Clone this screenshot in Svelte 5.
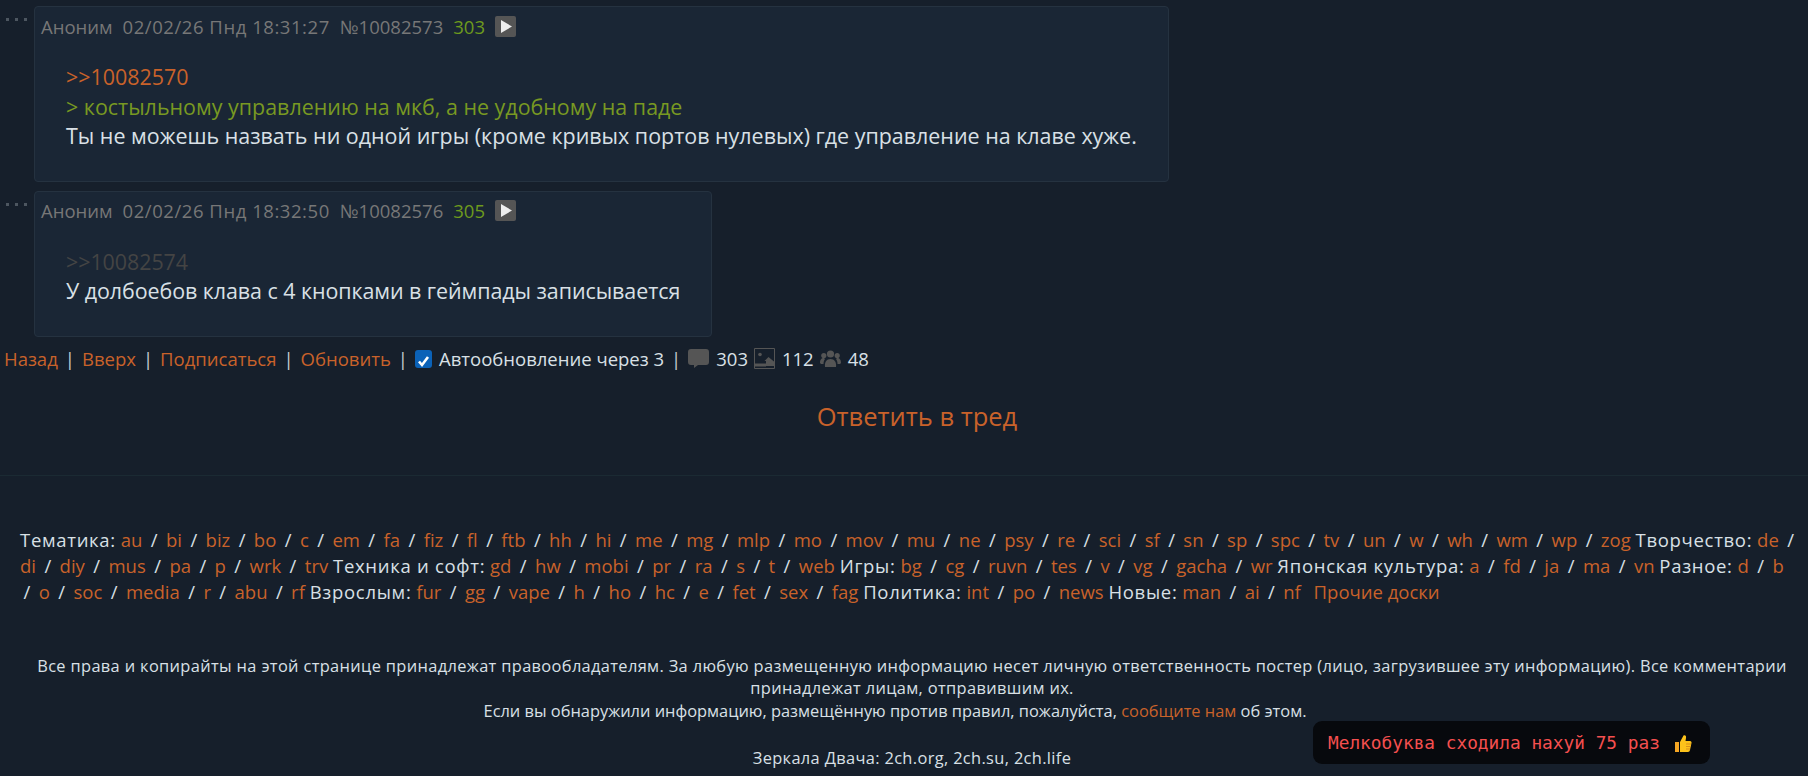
<script>
	const boards = [
		['Тематика:', ['au','bi','biz','bo','c','em','fa','fiz','fl','ftb','hh','hi','me','mg','mlp','mo','mov','mu','ne','psy','re','sci','sf','sn','sp','spc','tv','un','w','wh','wm','wp','zog']],
		['Творчество:', ['de','di','diy','mus','pa','p','wrk','trv']],
		['Техника и софт:', ['gd','hw','mobi','pr','ra','s','t','web']],
		['Игры:', ['bg','cg','ruvn','tes','v','vg','gacha','wr']],
		['Японская культура:', ['a','fd','ja','ma','vn']],
		['Разное:', ['d','b','o','soc','media','r','abu','rf']],
		['Взрослым:', ['fur','gg','vape','h','ho','hc','e','fet','sex','fag']],
		['Политика:', ['int','po','news']],
		['Новые:', ['man','ai','nf']]
	];
</script>

<div class="page">
	<div class="post-row">
		<div class="dots"><i></i><i></i><i></i></div>
		<article class="post">
			<header class="post__head">
				<span>Аноним</span>
				<span class="post__date">02/02/26 Пнд 18:31:27</span>
				<span>№10082573</span>
				<span class="post__count">303</span>
				<span class="play"><svg viewBox="0 0 21 21" width="21" height="21"><path d="M6 4 17 10.500 6 17Z" fill="#eee" /></svg></span>
			</header>
			<div class="post__msg">
				<a href="#r">&gt;&gt;10082570</a><br />
				<span class="quote">&gt; костыльному управлению на мкб, а не удобному на паде</span><br />
				Ты не можешь назвать ни одной игры (кроме кривых портов нулевых) где управление на клаве хуже.
			</div>
		</article>
	</div>

	<div class="post-row">
		<div class="dots"><i></i><i></i><i></i></div>
		<article class="post">
			<header class="post__head">
				<span>Аноним</span>
				<span class="post__date">02/02/26 Пнд 18:32:50</span>
				<span>№10082576</span>
				<span class="post__count">305</span>
				<span class="play"><svg viewBox="0 0 21 21" width="21" height="21"><path d="M6 4 17 10.500 6 17Z" fill="#eee" /></svg></span>
			</header>
			<div class="post__msg post__msg--short">
				<a class="dead" href="#r">&gt;&gt;10082574</a><br />
				У долбоебов клава с 4 кнопками в геймпады записывается
			</div>
		</article>
	</div>

	<div class="bar">
		<a href="#b">Назад</a><span class="sep">|</span><a href="#t">Вверх</a><span class="sep">|</span><a href="#s">Подписаться</a><span class="sep">|</span><a href="#u">Обновить</a><span class="sep">|</span>
		<label class="auto"><span class="check"><svg viewBox="0 0 17 18" width="17" height="18"><path d="M4 9.500 7 13 13 5" fill="none" stroke="#fff" stroke-width="2.600" /></svg></span>Автообновление через 3</label><span class="sep">|</span>
		<svg class="ico" viewBox="0 0 21 19" width="21" height="19"><path d="M3 0h15a3 3 0 0 1 3 3v10a3 3 0 0 1-3 3H10l-4 3v-3H3a3 3 0 0 1-3-3V3a3 3 0 0 1 3-3Z" fill="#555" /></svg>
		<span class="num">303</span>
		<svg class="ico" viewBox="0 0 21 21" width="21" height="21"><path d="M.5.500h20v20H.5Z" fill="none" stroke="#555" /><circle cx="6" cy="6.500" r="1.800" fill="#555" /><path d="M1 15.500h11v3H1Z" fill="#555" /><path d="M12 18v-5h-1.500l4-4 6 5v4Z" fill="#555" /></svg>
		<span class="num">112</span>
		<svg class="ico" viewBox="0 0 21 18" width="21" height="18"><g fill="#555"><circle cx="10.500" cy="4" r="3.600" /><circle cx="3.800" cy="5.500" r="2.600" /><circle cx="17.200" cy="5.500" r="2.600" /><path d="M5 17c-.6-5 1.500-8 5.500-8s6.100 3 5.500 8Z" /><path d="M0 13c0-3 1-5 4-5l1 1c-1 1-1.500 3-1.500 5H1Zm21 0c0-3-1-5-4-5l-1 1c1 1 1.500 3 1.500 5H20Z" /></g></svg>
		<span class="num">48</span>
	</div>

	<div class="reply"><a href="#f">Ответить в тред</a></div>
	<hr class="rule" />

	<nav class="boards">
		{#each boards as [title, list]}
			<span class="boards__title">{title}</span>{' '}
			{#each list as b, i}<a href="#x">{b}</a>{' '}{#if i < list.length - 1}<span class="slash">/</span>{' '}{/if}{/each}
		{/each}
		<a class="boards__more" href="#o">Прочие доски</a>
	</nav>

	<footer class="foot">
		<p class="foot__lead">Все права и копирайты на этой странице принадлежат правообладателям. За любую размещенную информацию несет личную ответственность постер (лицо, загрузившее эту информацию). Все комментарии принадлежат лицам, отправившим их.</p>
		<p class="foot__report">Если вы обнаружили информацию, размещённую против правил, пожалуйста, <a href="#c">сообщите нам</a> об этом.</p>
		<p class="mirrors">Зеркала Двача: 2ch.org, 2ch.su, 2ch.life</p>
	</footer>
</div>

<div class="toast">Мелкобуква сходила нахуй 75 раз
	<svg viewBox="0 0 18 18" width="18" height="18"><path d="M6 8 9.500 1.500c1.800-.8 3 .7 2.500 2.500L11.500 7H16c1.200 0 1.800 1 1.500 2L16 16c-.2 1-1 2-2 2H6Z" fill="#fcc21b" /><path d="M1 8h4v10H1Z" fill="#f5a623" /><path d="M12 10h5M12 12.500h4.500M12 15h4" stroke="#d9901a" stroke-width="1" /></svg>
</div>

<style>
	:global(body) {
		background: #161f2b;
	}

	.page {
		padding-top: 6px;
		color: #d9e0e6;
		font-family: 'Open Sans', sans-serif;
		font-size: 18.5px;
		height: 770px;
		overflow: hidden;
	}

	a {
		color: #c9622a;
		text-decoration: none;
	}

	.post-row {
		display: flex;
		margin-bottom: 9px;
	}

	.dots {
		display: flex;
		gap: 6px;
		width: 34px;
		padding: 12px 0 0 6px;
		box-sizing: border-box;
	}

	.dots i {
		width: 3px;
		height: 3px;
		background: #4d5660;
	}

	.post {
		border: 1px solid #253240;
		border-radius: 4px;
		background: #1a2635;
		padding: 8px 31px 0 6px;
	}

	.post__head {
		display: flex;
		gap: 10px;
		align-items: center;
		height: 22px;
		color: #777;
	}

	.post__date {
		letter-spacing: 0.55px;
	}

	.post__count {
		color: #6d9a1d;
	}

	.play {
		display: block;
		width: 21px;
		height: 21px;
		background: #555;
		border-radius: 2px;
	}

	.post__msg {
		padding: 25px 0 30px 25px;
		font-size: 21.45px;
		line-height: 29.500px;
	}

	.post__msg--short {
		letter-spacing: -0.06px;
	}

	.quote {
		color: #789922;
	}

	.dead {
		color: #444;
	}

	.bar {
		display: flex;
		align-items: center;
		padding-left: 4px;
		margin-top: 7px;
		height: 26px;
		white-space: pre;
	}

	.sep {
		margin: 0 7px;
		color: #c5ccd3;
	}

	.auto {
		display: flex;
		align-items: center;
		gap: 7px;
	}

	.check {
		display: block;
		width: 17px;
		height: 18px;
		border-radius: 3px;
		background: #0b62b8;
	}

	.ico {
		margin-right: 7px;
	}

	.num {
		margin-right: 6px;
	}

	.reply {
		padding-left: 26px;
		text-align: center;
		font-size: 25.5px;
		margin-top: 27px;
	}

	.rule {
		margin: 42px 0 0;
		border: 0;
		border-top: 1px solid #1b2a33;
	}

	.boards {
		margin-top: 51px;
		padding: 0 10px 0 20px;
		line-height: 26px;
	}

	.boards__title {
		font-weight: 500;
		letter-spacing: 0.7px;
	}

	.slash {
		margin: 0 3.600px;
	}

	.boards__more {
		margin-left: 8px;
	}

	.foot {
		margin-top: 50px;
		padding: 0 20px 0 36px;
		text-align: center;
		font-size: 16.4px;
		line-height: 22.500px;
	}

	.foot p {
		margin: 0;
	}

	.foot__lead {
		letter-spacing: 0.35px;
	}

	.foot__report {
		padding-right: 34px;
	}

	.foot .mirrors {
		padding-top: 25px;
		letter-spacing: 0.35px;
	}

	.toast {
		position: fixed;
		right: 98px;
		bottom: 12px;
		width: 397px;
		height: 43px;
		box-sizing: border-box;
		display: flex;
		align-items: center;
		gap: 14px;
		padding: 0 15px;
		border-radius: 9px;
		background: #07090d;
		color: #f44f4f;
		font-family: 'DejaVu Sans Mono', monospace;
		font-size: 17.8px;
		white-space: nowrap;
	}
</style>
